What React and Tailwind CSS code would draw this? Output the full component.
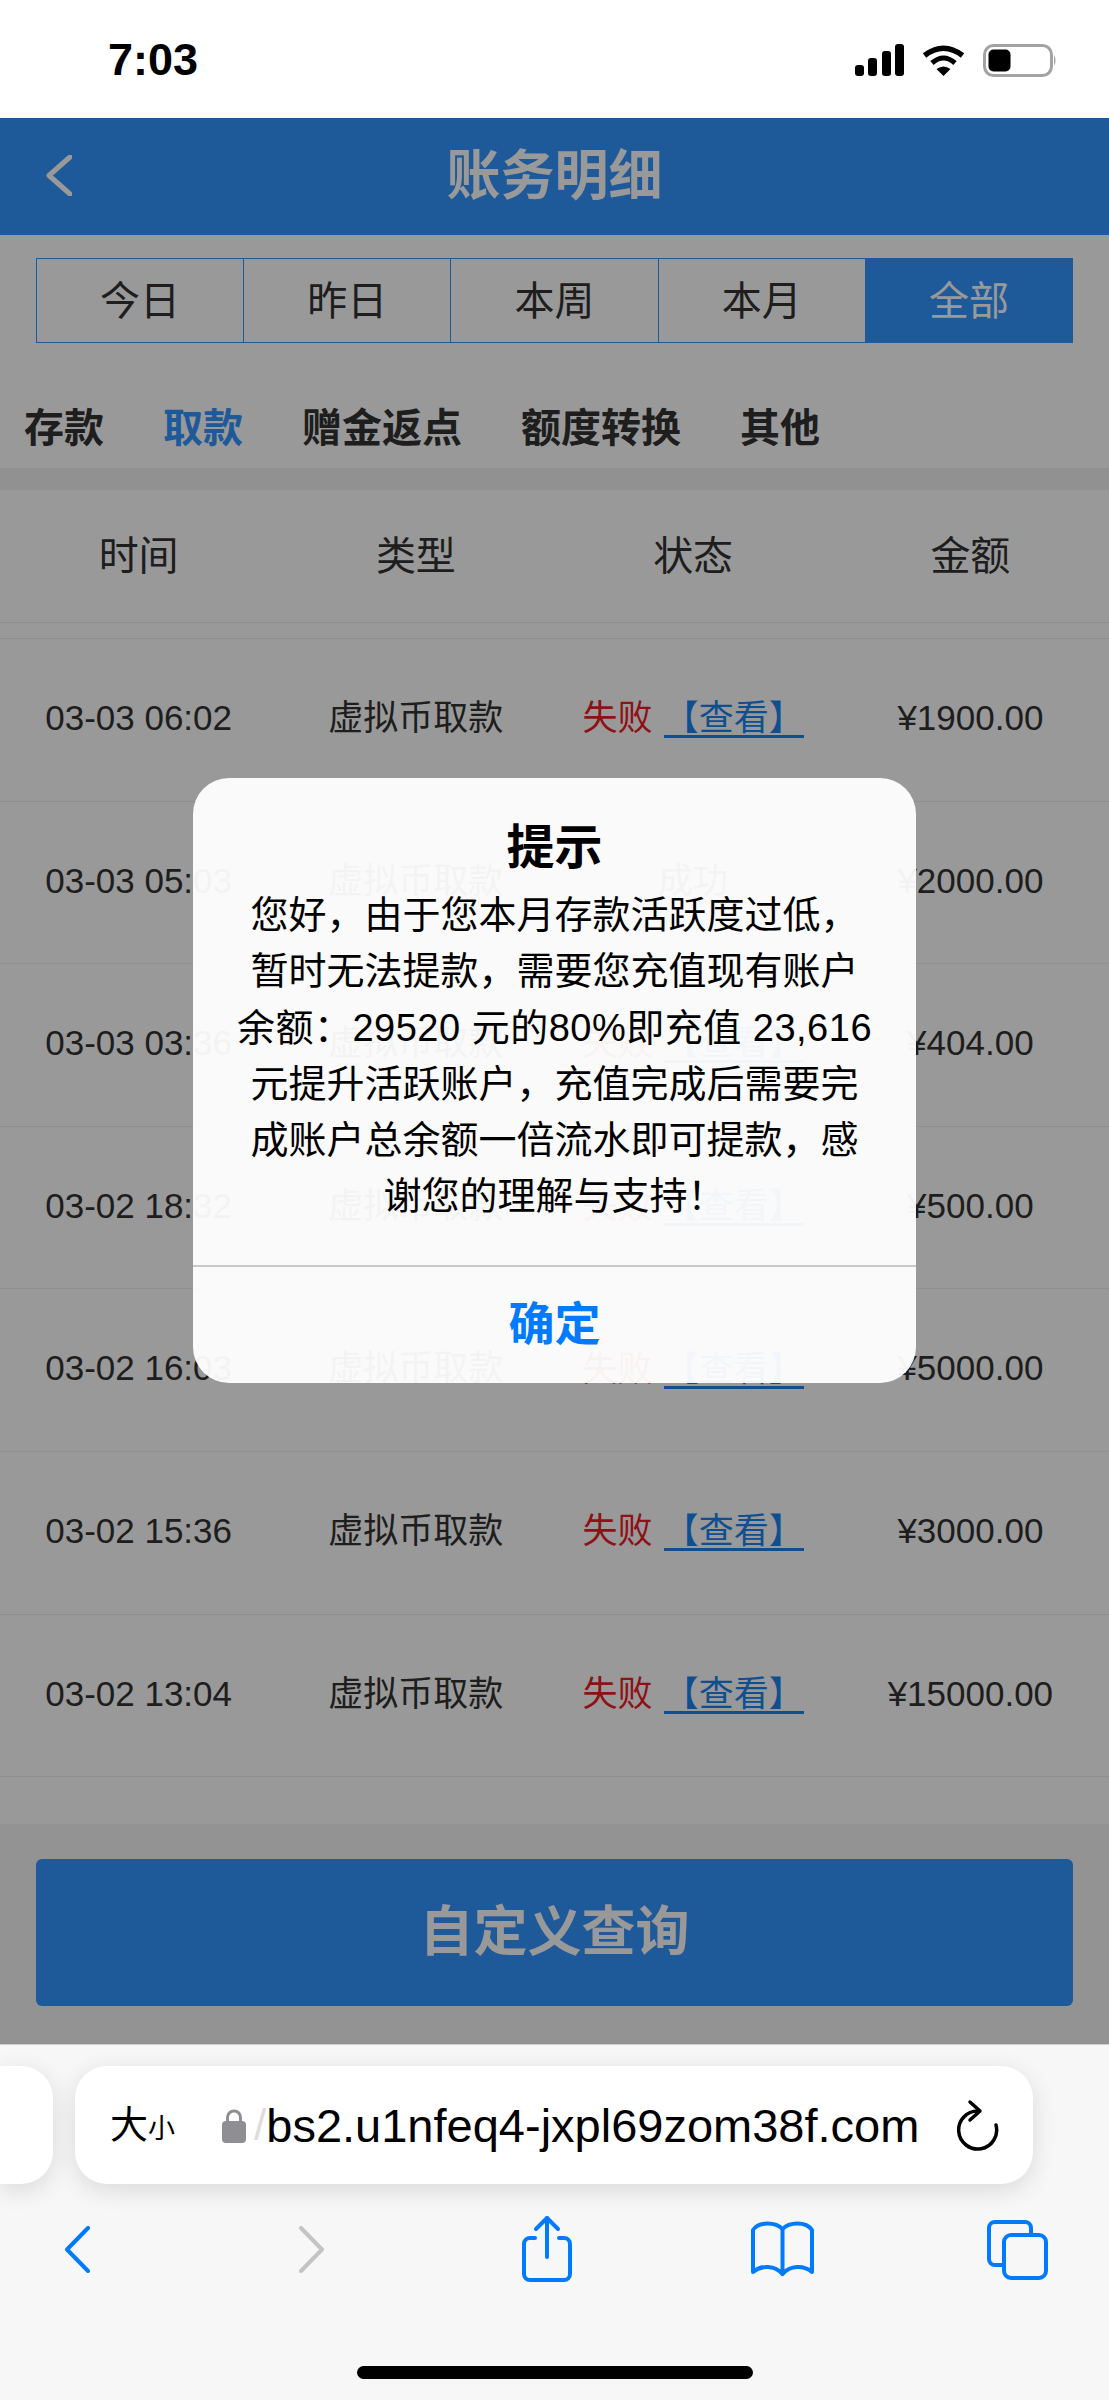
const rows = [
  ["03-03 06:02", "失败", "¥1900.00"],
  ["03-03 05:03", "成功", "¥2000.00"],
  ["03-03 03:36", "失败", "¥404.00"],
  ["03-02 18:32", "失败", "¥500.00"],
  ["03-02 16:03", "失败", "¥5000.00"],
  ["03-02 15:36", "失败", "¥3000.00"],
  ["03-02 13:04", "失败", "¥15000.00"],
];
const tabs = ["今日", "昨日", "本周", "本月", "全部"];
const cats = ["存款", "取款", "赠金返点", "额度转换", "其他"];
const heads = ["时间", "类型", "状态", "金额"];

function Chevron({ dir = "left", color, w = 26, h = 47, sw = 4 }) {
  const d = dir === "left" ? `M${w - 2} 2 L3 ${h / 2} L${w - 2} ${h - 2}` : `M2 2 L${w - 3} ${h / 2} L2 ${h - 2}`;
  return (
    <svg width={w} height={h} viewBox={`0 0 ${w} ${h}`} fill="none" stroke={color} strokeWidth={sw} strokeLinecap="round" strokeLinejoin="round">
      <path d={d} />
    </svg>
  );
}

export default function App() {
  return (
    <div className="w-[1109px] h-[2400px] flex flex-col overflow-hidden bg-white font-['Liberation_Sans','Noto_Sans_CJK_SC',sans-serif]">
      <div className="h-[118px] shrink-0 flex items-start justify-between pl-[108px] pr-[52px] bg-white">
        <div className="mt-[33px] text-[45px] leading-[54px] font-bold text-black">7:03</div>
        <div className="mt-[44px] flex items-start">
          <svg width="49" height="32" viewBox="0 0 49 32" fill="#000">
            <rect x="0" y="21" width="9" height="11" rx="3" />
            <rect x="13" y="14" width="9" height="18" rx="3" />
            <rect x="27" y="7" width="9" height="25" rx="3" />
            <rect x="40" y="0" width="9" height="32" rx="3" />
          </svg>
          <svg className="ml-[18px]" width="43" height="32" viewBox="0 0 43 32" fill="none" stroke="#000">
            <path d="M2.5 11.5 Q21.5 -3 40.5 11.5" strokeWidth="5.5" />
            <path d="M10 19 Q21.5 9 33 19" strokeWidth="5" />
            <path d="M14.5 25 Q21.5 20 28.5 25 L21.5 32 Z" fill="#000" stroke="none" />
          </svg>
          <svg className="ml-[18px]" width="74" height="34" viewBox="0 0 74 34" fill="none">
            <rect x="1.5" y="1.5" width="67" height="30" rx="9" stroke="#a3a3a3" strokeWidth="3" />
            <rect x="5.5" y="5.5" width="22" height="22" rx="5" fill="#000" />
            <path d="M71 11 Q74 16.5 71 22 Z" fill="#a3a3a3" />
          </svg>
        </div>
      </div>

      <div className="relative h-[1926px] shrink-0 flex flex-col text-[#333]">
        <div className="h-[117px] shrink-0 relative flex items-center justify-center bg-[#3395ff] text-white text-[54px] font-semibold">
          <span className="absolute left-[46px] top-[37px] flex">
            <Chevron color="#fff" w={26} h={41} sw={5} />
          </span>
          账务明细
        </div>
        <div className="mt-[23px] mx-[36px] h-[85px] flex border border-[#3395ff]">
          {tabs.map((t, i) => (
            <div
              key={t}
              className={
                i === 4
                  ? "flex-1 flex items-center justify-center text-[40px] bg-[#3395ff] text-white"
                  : "flex-1 flex items-center justify-center text-[40px] border-r border-[#3395ff]"
              }
            >
              {t}
            </div>
          ))}
        </div>
        <div className="h-[125px] pt-[44px] pl-[24px] flex items-center gap-[59px] text-[40px] font-semibold">
          {cats.map((c, i) => (
            <span key={c} className={i === 1 ? "text-[#3395ff]" : ""}>{c}</span>
          ))}
        </div>
        <div className="h-[22px] shrink-0 bg-[#f2f2f2]" />
        <div className="h-[133px] shrink-0 grid grid-cols-4 items-center border-b border-[#f0f0f0] text-[40px] text-center">
          {heads.map((h) => <div key={h}>{h}</div>)}
        </div>
        <div className="h-[16px] shrink-0 border-b border-[#f0f0f0]" />
        {rows.map(([time, status, amount]) => (
          <div key={time} className="h-[162.6px] shrink-0 grid grid-cols-4 items-center text-center border-b border-[#f0f0f0] text-[35px] pb-[3px]">
            <div>{time}</div>
            <div>虚拟币取款</div>
            {status === "成功" ? (
              <div>成功</div>
            ) : (
              <div className="flex justify-center items-start gap-[11px] h-[40px]">
                <span className="text-[#ee1c25] leading-[40px]">{status}</span>
                <span className="text-[#1b84ee] leading-[36px] h-[40px] border-b-[3px] border-[#1b84ee] pt-[2px]">【查看】</span>
              </div>
            )}
            <div>{amount}</div>
          </div>
        ))}
        <div className="flex-1 bg-[#f5f5f5] mt-[47px] px-[36px] pt-[35px]">
          <div className="h-[147px] rounded-[6px] bg-[#3395ff] flex items-center justify-center text-white text-[54px] font-semibold">自定义查询</div>
        </div>

        <div className="absolute inset-0 bg-black/40" />
        <div className="absolute left-[193px] top-[660px] w-[723px] rounded-[36px] bg-white/95 flex flex-col text-black">
          <div className="pt-[42px] h-[98px] text-center text-[48px] leading-[56px] font-semibold">提示</div>
          <div className="mt-[11px] pb-[40px] text-center text-[38px] leading-[56.3px]">
            <div>您好，由于您本月存款活跃度过低，</div>
            <div>暂时无法提款，需要您充值现有账户</div>
            <div className="tracking-[0.5px]">余额：29520 元的80%即充值 23,616</div>
            <div>元提升活跃账户，充值完成后需要完</div>
            <div>成账户总余额一倍流水即可提款，感</div>
            <div>谢您的理解与支持！</div>
          </div>
          <div className="h-[118px] border-t-2 border-[#c9c9c9] flex items-center justify-center text-[46px] font-semibold text-[#007aff]">确定</div>
        </div>
      </div>

      <div className="flex-1 bg-[#f7f7f7] border-t border-[#d0d0d0] flex flex-col">
        <div className="mt-[21px] flex gap-[22px]">
          <div className="w-[53px] h-[118px] bg-white rounded-r-[32px] shadow-[0_6px_24px_rgba(0,0,0,0.12)]" />
          <div className="w-[958px] h-[118px] bg-white rounded-[32px] shadow-[0_6px_24px_rgba(0,0,0,0.12)] flex items-center pl-[35px] text-black">
            <span className="text-[38px] leading-none">大</span>
            <span className="text-[27px] leading-none mt-[9px]">小</span>
            <svg className="ml-[47px]" width="24" height="35" viewBox="0 0 24 35" fill="none">
              <path d="M5.5 15 V9.5 a6.5 6.5 0 0 1 13 0 V15" stroke="#8e8e93" strokeWidth="3" />
              <rect x="0" y="13" width="24" height="22" rx="4" fill="#8e8e93" />
            </svg>
            <span className="ml-[8px] text-[44px] leading-none text-[#dddddd]">/</span>
            <span className="text-[47px] leading-none">bs2.u1nfeq4-jxpl69zom38f.com</span>
            <svg className="ml-[37px]" width="44" height="52" viewBox="0 0 44 52" fill="none" stroke="#000" strokeWidth="3.5" strokeLinecap="round" strokeLinejoin="round">
              <path d="M22 12 A19 19 0 1 0 40 26" />
              <path d="M14 3 L24 12 L14 21" />
            </svg>
          </div>
        </div>
        <div className="mt-[30px] h-[70px] flex items-center justify-between pl-[37px] pr-[52px]">
          <div className="w-[80px] flex justify-center">
            <Chevron color="#007aff" />
          </div>
          <div className="w-[80px] flex justify-center">
            <Chevron dir="right" color="#c4c4c4" />
          </div>
          <div className="w-[80px] flex justify-center">
            <svg width="56" height="68" viewBox="0 0 56 68" fill="none" stroke="#007aff" strokeWidth="4" strokeLinecap="round" strokeLinejoin="round">
              <path d="M16 23 H11 a6 6 0 0 0 -6 6 V59 a6 6 0 0 0 6 6 H45 a6 6 0 0 0 6 -6 V29 a6 6 0 0 0 -6 -6 H40" />
              <path d="M28 3 V42" />
              <path d="M17 14 L28 3 L39 14" />
            </svg>
          </div>
          <div className="w-[80px] flex justify-center">
            <svg width="67" height="57" viewBox="0 0 67 57" fill="none" stroke="#007aff" strokeWidth="4" strokeLinecap="round" strokeLinejoin="round">
              <path d="M33.5 8 C27 1 10 0 4 9 V51 C12 44 26 44 33.5 53 C41 44 55 44 63 51 V9 C57 0 40 1 33.5 8 Z" />
              <path d="M33.5 8 V53" />
            </svg>
          </div>
          <div className="w-[80px] flex justify-center">
            <svg width="64" height="63" viewBox="0 0 64 63" fill="none" stroke="#007aff" strokeWidth="4" strokeLinecap="round" strokeLinejoin="round">
              <path d="M46 15 V10 a6 6 0 0 0 -6 -6 H10 a6 6 0 0 0 -6 6 V41 a6 6 0 0 0 6 6 H17" />
              <rect x="19" y="17" width="42" height="43" rx="7" />
            </svg>
          </div>
        </div>
        <div className="mt-[82px] mx-auto w-[396px] h-[13px] rounded-full bg-black" />
      </div>
    </div>
  );
}
